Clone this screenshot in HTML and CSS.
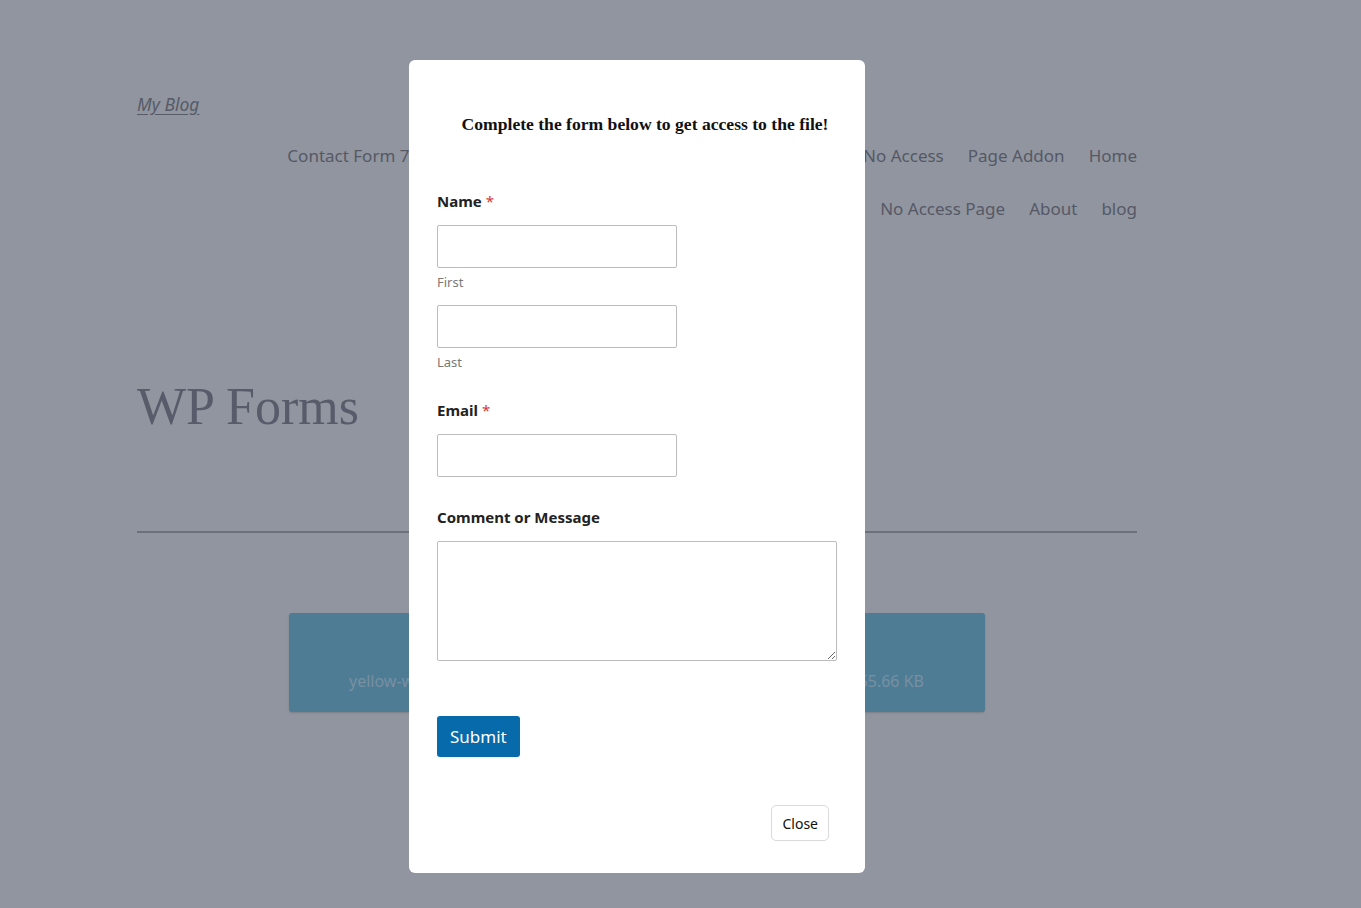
FILE: index.html
```html
<!DOCTYPE html>
<html lang="en">
<head>
    <meta charset="UTF-8">
    <meta name="viewport" content="width=device-width, initial-scale=1.0">
    <title>WP Forms – My Blog</title>
    <link rel="stylesheet" href="styles.css">
</head>
<body>
    <div class="site">
        <header class="site-header">
            <a class="site-title" href="#">My Blog</a>
            <nav class="menu">
                <a href="#">Contact Form 7</a>
                <a href="#">Download Monitor Pages</a>
                <a href="#">Gated Download Form</a>
                <a href="#">No Access</a>
                <a href="#">Page Addon</a>
                <a href="#">Home</a>
                <a href="#">Members Only</a>
                <a href="#">No Access Page</a>
                <a href="#">About</a>
                <a href="#">blog</a>
            </nav>
        </header>

        <h1 class="page-title">WP Forms</h1>
        <hr class="divider">

        <div class="download-box">
            <span class="dl-name">yellow-wallpaper.jpg</span>
            <span class="dl-size">55.66 KB</span>
        </div>
    </div>

    <div class="overlay">
        <div class="modal">
            <h2 class="modal-title">Complete the form below to get access to the file!</h2>

            <form class="form">
                <div class="field field-name">
                    <label class="field-label">Name <span class="req">*</span></label>
                    <input type="text" class="input">
                    <span class="sublabel">First</span>
                    <input type="text" class="input input-second">
                    <span class="sublabel">Last</span>
                </div>

                <div class="field">
                    <label class="field-label">Email <span class="req">*</span></label>
                    <input type="email" class="input">
                </div>

                <div class="field">
                    <label class="field-label">Comment or Message</label>
                    <textarea class="textarea"></textarea>
                </div>

                <button type="button" class="btn-submit">Submit</button>
            </form>

            <div class="modal-footer">
                <button type="button" class="btn-close">Close</button>
            </div>
        </div>
    </div>
</body>
</html>
```

FILE: styles.css
```css
* {
    box-sizing: border-box;
}
html, body {
    margin: 0;
    height: 100%;
}
body {
    background-color: #91959f;
    font-family: "Noto Sans", "Open Sans", sans-serif;
    overflow: hidden;
}

/* page behind the popup (already dimmed) */
.site {
    width: 1000px;
    margin: 0 0 0 137px;
    padding-top: 92px;
}
.site-header {
    display: flex;
    flex-direction: column;
}
.site-title {
    align-self: flex-start;
    color: #575b67;
    font-size: 17.5px;
    font-style: italic;
    line-height: 24px;
    text-decoration: underline;
    text-underline-offset: 3px;
}
.menu {
    align-self: flex-end;
    width: 856px;
    display: flex;
    flex-wrap: wrap;
    justify-content: flex-end;
    column-gap: 24px;
    row-gap: 29px;
    margin-top: 28px;
}
.menu a {
    color: #555966;
    font-size: 17px;
    line-height: 24px;
    text-decoration: none;
}
.page-title {
    margin: 156px 0 0;
    color: #585c6a;
    font-family: "Liberation Serif", serif;
    font-size: 52px;
    font-weight: normal;
    line-height: 60px;
}
.divider {
    margin: 94px 0 0;
    border: 0;
    border-top: 2px solid #6c707a;
}
.download-box {
    width: 696px;
    height: 99px;
    margin: 80px 0 0 152px;
    padding: 0 61px 20px 60px;
    display: flex;
    align-items: flex-end;
    justify-content: space-between;
    background-color: #4f7c95;
    border-radius: 3px;
    box-shadow: 0 1px 2px rgba(0, 0, 0, 0.15);
    color: #7790a2;
    font-size: 16px;
    line-height: 22px;
}

/* popup */
.overlay {
    position: fixed;
    inset: 0;
    padding: 60px 0 0 409px;
}
.modal {
    width: 456px;
    height: 813px;
    padding: 0 28px;
    background-color: #fff;
    border-radius: 6px;
    display: flex;
    flex-direction: column;
}
.modal-title {
    margin: 52px 0 0;
    padding-left: 16px;
    text-align: center;
    color: #111;
    font-family: "Liberation Serif", serif;
    font-size: 17.6px;
    font-weight: bold;
    line-height: 24px;
    white-space: nowrap;
}
.form {
    margin-top: 54px;
}
.field {
    display: flex;
    flex-direction: column;
    align-items: flex-start;
    margin-bottom: 29px;
}
.field-name {
    margin-bottom: 28px;
}
.field-label {
    color: #222;
    font-size: 15px;
    font-weight: 700;
    line-height: 22px;
    margin-bottom: 13px;
}
.req {
    color: #d63638;
    font-weight: normal;
}
.input {
    width: 240px;
    height: 43px;
    border: 1px solid #bcbcbc;
    border-radius: 2px;
    padding: 0 10px;
    font-family: inherit;
}
.input-second {
    margin-top: 14px;
}
.sublabel {
    margin-top: 5px;
    color: #7a7a7a;
    font-size: 13px;
    line-height: 18px;
}
.textarea {
    width: 400px;
    height: 120px;
    border: 1px solid #bcbcbc;
    border-radius: 2px;
    font-family: inherit;
}
.btn-submit {
    margin-top: 26px;
    height: 41px;
    padding: 0 13px;
    background-color: #066aab;
    color: #fff;
    border: 0;
    border-radius: 3px;
    font-family: inherit;
    font-size: 17px;
}
.modal-footer {
    margin-top: 48px;
    display: flex;
    justify-content: flex-end;
    padding-right: 8px;
}
.btn-close {
    height: 36px;
    padding: 0 10px;
    background-color: #fff;
    color: #111;
    border: 1px solid #d9d9de;
    border-radius: 5px;
    font-family: inherit;
    font-size: 14px;
}
```
